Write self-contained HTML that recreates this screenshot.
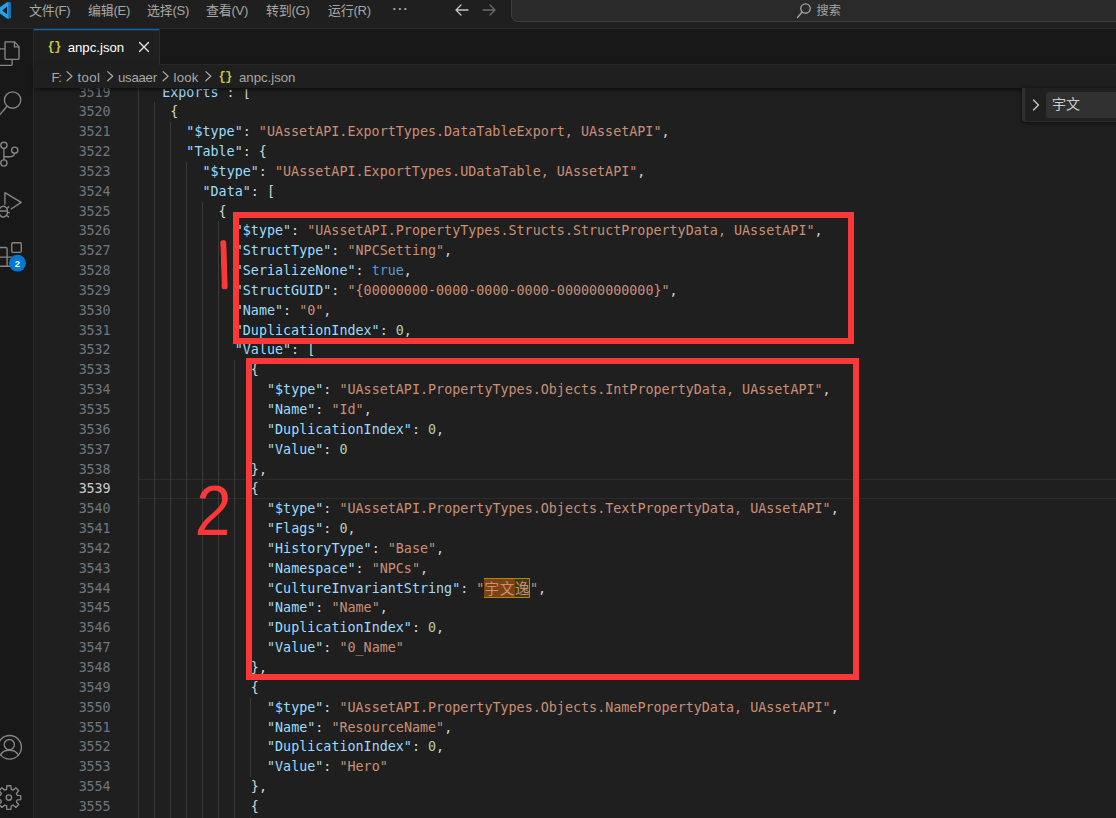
<!DOCTYPE html>
<html lang="zh-CN">
<head>
<meta charset="utf-8">
<title>anpc.json</title>
<style>
html,body{margin:0;padding:0;}
body{width:1116px;height:818px;overflow:hidden;background:#1f1f1f;position:relative;
  font-family:"Liberation Sans","Noto Sans CJK SC",sans-serif;color:#ccc;}
.abs{position:absolute;}
/* title bar */
#title{left:0;top:0;width:1116px;height:28px;background:#1f1f1f;border-bottom:1px solid #2b2b2b;}
#title .mi{position:absolute;top:0;height:22px;line-height:22px;font-size:13px;color:#a6a6a6;white-space:nowrap;letter-spacing:-0.25px;}
#search{left:511px;top:-8px;width:640px;height:30px;box-sizing:border-box;background:#2a2a2a;border:1px solid #404040;border-radius:7px;}
#search span{position:absolute;left:304.5px;top:7px;height:22px;line-height:22px;font-size:12.2px;color:#a6a6a6;}
/* activity bar */
#act{left:0;top:29px;width:33px;height:789px;background:#181818;border-right:1px solid #2b2b2b;}
/* tabs */
#tabs{left:34px;top:29px;width:1082px;height:35px;background:#181818;border-bottom:1px solid #2b2b2b;}
#tab{left:34px;top:29px;width:125px;height:36px;background:#1f1f1f;border-right:1px solid #2b2b2b;box-sizing:content-box;}
#tab:before{content:"";position:absolute;left:0;top:0;width:125px;height:1px;background:#0a69b7;box-shadow:0 1px 0 rgba(10,105,183,.25);}
#tab .nm{position:absolute;left:33.7px;top:9.3px;height:20px;line-height:20px;font-size:13.2px;color:#fff;}
#tab .br{position:absolute;left:13.5px;top:7.5px;height:20px;line-height:20px;font-size:12px;color:#cbcb41;font-family:"Liberation Mono",monospace;font-weight:bold;letter-spacing:-0.4px;}
/* breadcrumbs */
#bc{left:34px;top:65px;width:1082px;height:23px;background:#1f1f1f;z-index:5;box-shadow:0 2px 4px rgba(0,0,0,.55);}
#bc span{position:absolute;top:2.2px;height:22px;line-height:22px;font-size:13.2px;color:#a9a9a9;white-space:nowrap;}
/* editor */
#ed{left:34px;top:88px;width:1082px;height:730px;overflow:hidden;}
#lines{position:absolute;left:0;top:-5.5px;width:1082px;}
.row{position:relative;height:19.857px;width:1082px;}
.row .ln{position:absolute;left:0;width:76.3px;text-align:right;color:#6e7681;letter-spacing:-0.15px;}
.row .ln.cur{color:#ccc;}
.row,.code{font-family:"DejaVu Sans Mono","Liberation Mono","Noto Sans CJK SC",monospace;font-size:13.39px;line-height:19.857px;white-space:pre;}
.row .g{position:absolute;top:0;width:1px;height:19.857px;background:#3a3a3a;margin-left:104px;}
.row .code{position:absolute;top:0;margin-left:104px;}
.row.active:before{content:"";position:absolute;left:104px;right:0;top:0;height:19.857px;box-sizing:border-box;border-top:1px solid #2c2c2c;border-bottom:1px solid #2c2c2c;}
.row.first .code{clip-path:inset(6.5px 0 0 0);}
.hq{opacity:0;}
.k{color:#9cdcfe}.s{color:#ca8f76}.n{color:#b5cea8}.b{color:#569cd6}.p{color:#d4d4d4}
.cj{display:inline-block;width:45.5px;height:20.857px;margin-top:-1px;vertical-align:top;box-sizing:border-box;border:1px solid #b5850b;position:relative;}
.cj span{position:absolute;top:0;height:18.857px;line-height:17.857px;font-family:"Noto Sans CJK SC",sans-serif;font-size:14.5px;text-align:center;}
.cj .m1{left:-1px;width:30.5px;background:#7a4312;letter-spacing:0.6px;}
.cj .m2{left:29.5px;width:14px;background:#3e3a16;}
/* annotations */
.rect{position:absolute;box-sizing:border-box;border:6px solid #fa3838;z-index:4;}
#anno{left:0;top:0;z-index:4;}
/* find widget */
#find{left:1022px;top:88px;width:100px;height:33px;background:#202020;border-bottom:1px solid #2c2c2c;border-left:3px solid #2f2f2f;border-bottom-left-radius:4px;box-shadow:0 1px 5px rgba(0,0,0,.6);z-index:6;}
#find .inp{position:absolute;left:21px;top:4px;width:90px;height:26px;background:#313131;border-radius:3px;}
#find .inp span{position:absolute;left:6px;top:0;height:26px;line-height:25px;font-size:14px;color:#ccc;}
</style>
</head>
<body>
<!-- title bar -->
<div id="title" class="abs">
  <svg class="abs" style="left:0;top:0" width="20" height="28" viewBox="0 0 20 28">
    <path d="M-2 8.6 L7 2.3 L8.6 1.9 L11 3.1 L11 17.6 L8.6 18.8 L7 18.4 L-2 12.2 Z" fill="#2b9fe8"/>
    <path d="M8.3 1.9 L11 3.1 L11 17.6 L8.3 18.8 Z" fill="#1274c0"/>
    <path d="M2.3 10.4 L7.1 6.6 L7.1 14.2 Z" fill="#1f1f1f"/>
  </svg>
  <span class="mi" style="left:29px">文件(F)</span>
  <span class="mi" style="left:88px">编辑(E)</span>
  <span class="mi" style="left:147px">选择(S)</span>
  <span class="mi" style="left:206px">查看(V)</span>
  <span class="mi" style="left:266px">转到(G)</span>
  <span class="mi" style="left:328px">运行(R)</span>
  <span class="mi" style="left:392.5px;letter-spacing:1.2px;top:-2px;font-weight:bold">···</span>
  <svg class="abs" style="left:452px;top:1.3px" width="48" height="18" viewBox="0 0 48 18" fill="none" stroke-width="1.3" stroke-linecap="round" stroke-linejoin="round">
    <path d="M16 9 H4 M9 4 L4 9 L9 14" stroke="#c5c5c5"/>
    <path d="M31 9 H43 M38 4 L43 9 L38 14" stroke="#6a6a6a"/>
  </svg>
  <div id="search" class="abs">
    <svg class="abs" style="left:284px;top:9px" width="16" height="18" viewBox="0 0 16 18" fill="none" stroke="#a6a6a6" stroke-width="1.3" stroke-linecap="round">
      <circle cx="9.5" cy="6.5" r="4.7"/><path d="M6.2 10 L1.5 15.5"/>
    </svg>
    <span>搜索</span>
  </div>
</div>

<!-- activity bar -->
<div id="act" class="abs">
<svg class="abs" style="left:0;top:0" width="33" height="789" viewBox="0 29 33 789" fill="none" stroke="#878787" stroke-width="1.35" stroke-linejoin="round" stroke-linecap="butt">
  <!-- explorer -->
  <path d="M5 42.6 Q5 41.9 5.7 41.9 H14.6 L19 46.6 V58.6 Q19 59.3 18.3 59.3 H5.7 Q5 59.3 5 58.6 Z"/>
  <path d="M14.4 42 V46.9 H19"/>
  <path d="M5 48.9 H-2 V65.3 H11.4 Q12.1 65.3 12.1 64.6 V59.6"/>
  <!-- search -->
  <circle cx="12.6" cy="100" r="8.2"/>
  <path d="M7 106.2 L-1 115.6"/>
  <!-- source control -->
  <circle cx="3.9" cy="145.3" r="3.1"/>
  <circle cx="14.7" cy="150.2" r="3.1"/>
  <circle cx="3.9" cy="163" r="3.1"/>
  <path d="M3.9 148.4 V159.9"/>
  <path d="M3.9 156.7 H10.4 Q14.2 156.7 14.5 153.3"/>
  <!-- run and debug -->
  <path d="M4.9 204.8 V192.7 L21.2 202.4 L10.7 209.3"/>
  <ellipse cx="3.3" cy="211.6" rx="4.3" ry="5.4"/>
  <path d="M-1 211 H7.6 M7.2 208.3 L9.2 206.6 M7.6 212.6 H9.8 M7 215.6 L9 217.2"/>
  <!-- extensions -->
  <rect x="11.7" y="242.7" width="9.6" height="9.6" rx="1.3"/>
  <path d="M-2 247.5 H5.9 Q7.1 247.5 7.1 248.7 V266.2 M-2 257.1 H12 M-2 266.2 H12"/>
  <circle cx="17.5" cy="263.2" r="8.4" fill="#0078d4" stroke="none"/>
  <text x="17.5" y="266.7" text-anchor="middle" font-family="Liberation Sans, sans-serif" font-weight="bold" font-size="9.5" fill="#fff" stroke="none">2</text>
  <!-- account -->
  <circle cx="9.6" cy="747.3" r="11.8"/>
  <circle cx="9.3" cy="744.6" r="5.1"/>
  <path d="M0.6 755 Q2.6 750.2 9.3 750.2 Q16 750.2 18.3 755"/>
  <!-- settings gear -->
  <g transform="translate(8.9 797.6)">
    <circle cx="0" cy="0" r="2.7"/>
    <path d="M-2.29 -8.29 L-2.03 -11.83 L2.03 -11.83 L2.29 -8.29 L4.24 -7.48 L6.93 -9.80 L9.80 -6.93 L7.48 -4.24 L8.29 -2.29 L11.83 -2.03 L11.83 2.03 L8.29 2.29 L7.48 4.24 L9.80 6.93 L6.93 9.80 L4.24 7.48 L2.29 8.29 L2.03 11.83 L-2.03 11.83 L-2.29 8.29 L-4.24 7.48 L-6.93 9.80 L-9.80 6.93 L-7.48 4.24 L-8.29 2.29 L-11.83 2.03 L-11.83 -2.03 L-8.29 -2.29 L-7.48 -4.24 L-9.80 -6.93 L-6.93 -9.80 L-4.24 -7.48 Z"/>
  </g>
</svg>

</div>

<!-- tabs -->
<div id="tabs" class="abs"></div>
<div id="tab" class="abs">
  <span class="br">{}</span>
  <span class="nm">anpc.json</span>
  <svg class="abs" style="left:104.3px;top:12.2px" width="12" height="12" viewBox="0 0 12 12" fill="none" stroke="#e6e6e6" stroke-width="1.4" stroke-linecap="round"><path d="M1.5 1.5 L10.5 10.5 M10.5 1.5 L1.5 10.5"/></svg>
</div>

<!-- breadcrumbs -->
<div id="bc" class="abs">
  <span style="left:17.5px;letter-spacing:-1.3px">F:</span>
  <span style="left:43.5px;letter-spacing:0.35px">tool</span>
  <span style="left:84px;letter-spacing:-0.25px">usaaer</span>
  <span style="left:139.5px;letter-spacing:0.2px">look</span>
  <span style="left:205px">anpc.json</span>
  <span style="left:184.5px;top:0.5px;font-size:12px;color:#cbcb41;font-family:'Liberation Mono',monospace;font-weight:bold;letter-spacing:-0.4px;">{}</span>
  <svg class="abs" style="left:0;top:0" width="200" height="23" viewBox="0 0 200 23" fill="none" stroke="#a9a9a9" stroke-width="1.2" stroke-linecap="round" stroke-linejoin="round">
    <path d="M33 6.6 L38 11.2 L33 15.8"/><path d="M73.7 6.6 L78.7 11.2 L73.7 15.8"/><path d="M129.1 6.6 L134.1 11.2 L129.1 15.8"/><path d="M171.8 6.6 L176.8 11.2 L171.8 15.8"/>
  </svg>
</div>

<!-- editor -->
<div id="ed" class="abs">
<div id="lines">
<div class="row first"><span class="ln">3519</span><i class="g" style="left:0.0px"></i><span class="code" style="left:16.12px"><span class="k"><span class="hq">"</span>Exports<span class="hq">"</span></span><span class="p">: </span><span class="p">[</span></span></div>
<div class="row"><span class="ln">3520</span><i class="g" style="left:0.0px"></i><i class="g" style="left:16.1px"></i><span class="code" style="left:32.24px"><span class="p">{</span></span></div>
<div class="row"><span class="ln">3521</span><i class="g" style="left:0.0px"></i><i class="g" style="left:16.1px"></i><i class="g" style="left:32.1px"></i><span class="code" style="left:48.37px"><span class="k">"$type"</span><span class="p">: </span><span class="s">"UAssetAPI.ExportTypes.DataTableExport, UAssetAPI"</span><span class="p">,</span></span></div>
<div class="row"><span class="ln">3522</span><i class="g" style="left:0.0px"></i><i class="g" style="left:16.1px"></i><i class="g" style="left:32.1px"></i><span class="code" style="left:48.37px"><span class="k">"Table"</span><span class="p">: </span><span class="p">{</span></span></div>
<div class="row"><span class="ln">3523</span><i class="g" style="left:0.0px"></i><i class="g" style="left:16.1px"></i><i class="g" style="left:32.1px"></i><i class="g" style="left:48.2px"></i><span class="code" style="left:64.49px"><span class="k">"$type"</span><span class="p">: </span><span class="s">"UAssetAPI.ExportTypes.UDataTable, UAssetAPI"</span><span class="p">,</span></span></div>
<div class="row"><span class="ln">3524</span><i class="g" style="left:0.0px"></i><i class="g" style="left:16.1px"></i><i class="g" style="left:32.1px"></i><i class="g" style="left:48.2px"></i><span class="code" style="left:64.49px"><span class="k">"Data"</span><span class="p">: </span><span class="p">[</span></span></div>
<div class="row"><span class="ln">3525</span><i class="g" style="left:0.0px"></i><i class="g" style="left:16.1px"></i><i class="g" style="left:32.1px"></i><i class="g" style="left:48.2px"></i><i class="g" style="left:64.2px"></i><span class="code" style="left:80.61px"><span class="p">{</span></span></div>
<div class="row"><span class="ln">3526</span><i class="g" style="left:0.0px"></i><i class="g" style="left:16.1px"></i><i class="g" style="left:32.1px"></i><i class="g" style="left:48.2px"></i><i class="g" style="left:64.2px"></i><i class="g" style="left:80.3px"></i><span class="code" style="left:96.73px"><span class="k">"$type"</span><span class="p">: </span><span class="s">"UAssetAPI.PropertyTypes.Structs.StructPropertyData, UAssetAPI"</span><span class="p">,</span></span></div>
<div class="row"><span class="ln">3527</span><i class="g" style="left:0.0px"></i><i class="g" style="left:16.1px"></i><i class="g" style="left:32.1px"></i><i class="g" style="left:48.2px"></i><i class="g" style="left:64.2px"></i><i class="g" style="left:80.3px"></i><span class="code" style="left:96.73px"><span class="k">"StructType"</span><span class="p">: </span><span class="s">"NPCSetting"</span><span class="p">,</span></span></div>
<div class="row"><span class="ln">3528</span><i class="g" style="left:0.0px"></i><i class="g" style="left:16.1px"></i><i class="g" style="left:32.1px"></i><i class="g" style="left:48.2px"></i><i class="g" style="left:64.2px"></i><i class="g" style="left:80.3px"></i><span class="code" style="left:96.73px"><span class="k">"SerializeNone"</span><span class="p">: </span><span class="b">true</span><span class="p">,</span></span></div>
<div class="row"><span class="ln">3529</span><i class="g" style="left:0.0px"></i><i class="g" style="left:16.1px"></i><i class="g" style="left:32.1px"></i><i class="g" style="left:48.2px"></i><i class="g" style="left:64.2px"></i><i class="g" style="left:80.3px"></i><span class="code" style="left:96.73px"><span class="k">"StructGUID"</span><span class="p">: </span><span class="s">"{00000000-0000-0000-0000-000000000000}"</span><span class="p">,</span></span></div>
<div class="row"><span class="ln">3530</span><i class="g" style="left:0.0px"></i><i class="g" style="left:16.1px"></i><i class="g" style="left:32.1px"></i><i class="g" style="left:48.2px"></i><i class="g" style="left:64.2px"></i><i class="g" style="left:80.3px"></i><span class="code" style="left:96.73px"><span class="k">"Name"</span><span class="p">: </span><span class="s">"0"</span><span class="p">,</span></span></div>
<div class="row"><span class="ln">3531</span><i class="g" style="left:0.0px"></i><i class="g" style="left:16.1px"></i><i class="g" style="left:32.1px"></i><i class="g" style="left:48.2px"></i><i class="g" style="left:64.2px"></i><i class="g" style="left:80.3px"></i><span class="code" style="left:96.73px"><span class="k">"DuplicationIndex"</span><span class="p">: </span><span class="n">0</span><span class="p">,</span></span></div>
<div class="row"><span class="ln">3532</span><i class="g" style="left:0.0px"></i><i class="g" style="left:16.1px"></i><i class="g" style="left:32.1px"></i><i class="g" style="left:48.2px"></i><i class="g" style="left:64.2px"></i><i class="g" style="left:80.3px"></i><span class="code" style="left:96.73px"><span class="k">"Value"</span><span class="p">: </span><span class="p">[</span></span></div>
<div class="row"><span class="ln">3533</span><i class="g" style="left:0.0px"></i><i class="g" style="left:16.1px"></i><i class="g" style="left:32.1px"></i><i class="g" style="left:48.2px"></i><i class="g" style="left:64.2px"></i><i class="g" style="left:80.3px"></i><i class="g" style="left:96.4px"></i><span class="code" style="left:112.85px"><span class="p">{</span></span></div>
<div class="row"><span class="ln">3534</span><i class="g" style="left:0.0px"></i><i class="g" style="left:16.1px"></i><i class="g" style="left:32.1px"></i><i class="g" style="left:48.2px"></i><i class="g" style="left:64.2px"></i><i class="g" style="left:80.3px"></i><i class="g" style="left:96.4px"></i><i class="g" style="left:112.4px"></i><span class="code" style="left:128.98px"><span class="k">"$type"</span><span class="p">: </span><span class="s">"UAssetAPI.PropertyTypes.Objects.IntPropertyData, UAssetAPI"</span><span class="p">,</span></span></div>
<div class="row"><span class="ln">3535</span><i class="g" style="left:0.0px"></i><i class="g" style="left:16.1px"></i><i class="g" style="left:32.1px"></i><i class="g" style="left:48.2px"></i><i class="g" style="left:64.2px"></i><i class="g" style="left:80.3px"></i><i class="g" style="left:96.4px"></i><i class="g" style="left:112.4px"></i><span class="code" style="left:128.98px"><span class="k">"Name"</span><span class="p">: </span><span class="s">"Id"</span><span class="p">,</span></span></div>
<div class="row"><span class="ln">3536</span><i class="g" style="left:0.0px"></i><i class="g" style="left:16.1px"></i><i class="g" style="left:32.1px"></i><i class="g" style="left:48.2px"></i><i class="g" style="left:64.2px"></i><i class="g" style="left:80.3px"></i><i class="g" style="left:96.4px"></i><i class="g" style="left:112.4px"></i><span class="code" style="left:128.98px"><span class="k">"DuplicationIndex"</span><span class="p">: </span><span class="n">0</span><span class="p">,</span></span></div>
<div class="row"><span class="ln">3537</span><i class="g" style="left:0.0px"></i><i class="g" style="left:16.1px"></i><i class="g" style="left:32.1px"></i><i class="g" style="left:48.2px"></i><i class="g" style="left:64.2px"></i><i class="g" style="left:80.3px"></i><i class="g" style="left:96.4px"></i><i class="g" style="left:112.4px"></i><span class="code" style="left:128.98px"><span class="k">"Value"</span><span class="p">: </span><span class="n">0</span></span></div>
<div class="row"><span class="ln">3538</span><i class="g" style="left:0.0px"></i><i class="g" style="left:16.1px"></i><i class="g" style="left:32.1px"></i><i class="g" style="left:48.2px"></i><i class="g" style="left:64.2px"></i><i class="g" style="left:80.3px"></i><i class="g" style="left:96.4px"></i><span class="code" style="left:112.85px"><span class="p">},</span></span></div>
<div class="row active"><span class="ln cur">3539</span><i class="g" style="left:0.0px"></i><i class="g" style="left:16.1px"></i><i class="g" style="left:32.1px"></i><i class="g" style="left:48.2px"></i><i class="g" style="left:64.2px"></i><i class="g" style="left:80.3px"></i><i class="g" style="left:96.4px"></i><span class="code" style="left:112.85px"><span class="p">{</span></span></div>
<div class="row"><span class="ln">3540</span><i class="g" style="left:0.0px"></i><i class="g" style="left:16.1px"></i><i class="g" style="left:32.1px"></i><i class="g" style="left:48.2px"></i><i class="g" style="left:64.2px"></i><i class="g" style="left:80.3px"></i><i class="g" style="left:96.4px"></i><i class="g" style="left:112.4px"></i><span class="code" style="left:128.98px"><span class="k">"$type"</span><span class="p">: </span><span class="s">"UAssetAPI.PropertyTypes.Objects.TextPropertyData, UAssetAPI"</span><span class="p">,</span></span></div>
<div class="row"><span class="ln">3541</span><i class="g" style="left:0.0px"></i><i class="g" style="left:16.1px"></i><i class="g" style="left:32.1px"></i><i class="g" style="left:48.2px"></i><i class="g" style="left:64.2px"></i><i class="g" style="left:80.3px"></i><i class="g" style="left:96.4px"></i><i class="g" style="left:112.4px"></i><span class="code" style="left:128.98px"><span class="k">"Flags"</span><span class="p">: </span><span class="n">0</span><span class="p">,</span></span></div>
<div class="row"><span class="ln">3542</span><i class="g" style="left:0.0px"></i><i class="g" style="left:16.1px"></i><i class="g" style="left:32.1px"></i><i class="g" style="left:48.2px"></i><i class="g" style="left:64.2px"></i><i class="g" style="left:80.3px"></i><i class="g" style="left:96.4px"></i><i class="g" style="left:112.4px"></i><span class="code" style="left:128.98px"><span class="k">"HistoryType"</span><span class="p">: </span><span class="s">"Base"</span><span class="p">,</span></span></div>
<div class="row"><span class="ln">3543</span><i class="g" style="left:0.0px"></i><i class="g" style="left:16.1px"></i><i class="g" style="left:32.1px"></i><i class="g" style="left:48.2px"></i><i class="g" style="left:64.2px"></i><i class="g" style="left:80.3px"></i><i class="g" style="left:96.4px"></i><i class="g" style="left:112.4px"></i><span class="code" style="left:128.98px"><span class="k">"Namespace"</span><span class="p">: </span><span class="s">"NPCs"</span><span class="p">,</span></span></div>
<div class="row"><span class="ln">3544</span><i class="g" style="left:0.0px"></i><i class="g" style="left:16.1px"></i><i class="g" style="left:32.1px"></i><i class="g" style="left:48.2px"></i><i class="g" style="left:64.2px"></i><i class="g" style="left:80.3px"></i><i class="g" style="left:96.4px"></i><i class="g" style="left:112.4px"></i><span class="code" style="left:128.98px"><span class="k">"CultureInvariantString"</span><span class="p">: </span><span class="s">"<span class="cj"><span class="m1">宇文</span><span class="m2">逸</span></span>"</span><span class="p">,</span></span></div>
<div class="row"><span class="ln">3545</span><i class="g" style="left:0.0px"></i><i class="g" style="left:16.1px"></i><i class="g" style="left:32.1px"></i><i class="g" style="left:48.2px"></i><i class="g" style="left:64.2px"></i><i class="g" style="left:80.3px"></i><i class="g" style="left:96.4px"></i><i class="g" style="left:112.4px"></i><span class="code" style="left:128.98px"><span class="k">"Name"</span><span class="p">: </span><span class="s">"Name"</span><span class="p">,</span></span></div>
<div class="row"><span class="ln">3546</span><i class="g" style="left:0.0px"></i><i class="g" style="left:16.1px"></i><i class="g" style="left:32.1px"></i><i class="g" style="left:48.2px"></i><i class="g" style="left:64.2px"></i><i class="g" style="left:80.3px"></i><i class="g" style="left:96.4px"></i><i class="g" style="left:112.4px"></i><span class="code" style="left:128.98px"><span class="k">"DuplicationIndex"</span><span class="p">: </span><span class="n">0</span><span class="p">,</span></span></div>
<div class="row"><span class="ln">3547</span><i class="g" style="left:0.0px"></i><i class="g" style="left:16.1px"></i><i class="g" style="left:32.1px"></i><i class="g" style="left:48.2px"></i><i class="g" style="left:64.2px"></i><i class="g" style="left:80.3px"></i><i class="g" style="left:96.4px"></i><i class="g" style="left:112.4px"></i><span class="code" style="left:128.98px"><span class="k">"Value"</span><span class="p">: </span><span class="s">"0_Name"</span></span></div>
<div class="row"><span class="ln">3548</span><i class="g" style="left:0.0px"></i><i class="g" style="left:16.1px"></i><i class="g" style="left:32.1px"></i><i class="g" style="left:48.2px"></i><i class="g" style="left:64.2px"></i><i class="g" style="left:80.3px"></i><i class="g" style="left:96.4px"></i><span class="code" style="left:112.85px"><span class="p">},</span></span></div>
<div class="row"><span class="ln">3549</span><i class="g" style="left:0.0px"></i><i class="g" style="left:16.1px"></i><i class="g" style="left:32.1px"></i><i class="g" style="left:48.2px"></i><i class="g" style="left:64.2px"></i><i class="g" style="left:80.3px"></i><i class="g" style="left:96.4px"></i><span class="code" style="left:112.85px"><span class="p">{</span></span></div>
<div class="row"><span class="ln">3550</span><i class="g" style="left:0.0px"></i><i class="g" style="left:16.1px"></i><i class="g" style="left:32.1px"></i><i class="g" style="left:48.2px"></i><i class="g" style="left:64.2px"></i><i class="g" style="left:80.3px"></i><i class="g" style="left:96.4px"></i><i class="g" style="left:112.4px"></i><span class="code" style="left:128.98px"><span class="k">"$type"</span><span class="p">: </span><span class="s">"UAssetAPI.PropertyTypes.Objects.NamePropertyData, UAssetAPI"</span><span class="p">,</span></span></div>
<div class="row"><span class="ln">3551</span><i class="g" style="left:0.0px"></i><i class="g" style="left:16.1px"></i><i class="g" style="left:32.1px"></i><i class="g" style="left:48.2px"></i><i class="g" style="left:64.2px"></i><i class="g" style="left:80.3px"></i><i class="g" style="left:96.4px"></i><i class="g" style="left:112.4px"></i><span class="code" style="left:128.98px"><span class="k">"Name"</span><span class="p">: </span><span class="s">"ResourceName"</span><span class="p">,</span></span></div>
<div class="row"><span class="ln">3552</span><i class="g" style="left:0.0px"></i><i class="g" style="left:16.1px"></i><i class="g" style="left:32.1px"></i><i class="g" style="left:48.2px"></i><i class="g" style="left:64.2px"></i><i class="g" style="left:80.3px"></i><i class="g" style="left:96.4px"></i><i class="g" style="left:112.4px"></i><span class="code" style="left:128.98px"><span class="k">"DuplicationIndex"</span><span class="p">: </span><span class="n">0</span><span class="p">,</span></span></div>
<div class="row"><span class="ln">3553</span><i class="g" style="left:0.0px"></i><i class="g" style="left:16.1px"></i><i class="g" style="left:32.1px"></i><i class="g" style="left:48.2px"></i><i class="g" style="left:64.2px"></i><i class="g" style="left:80.3px"></i><i class="g" style="left:96.4px"></i><i class="g" style="left:112.4px"></i><span class="code" style="left:128.98px"><span class="k">"Value"</span><span class="p">: </span><span class="s">"Hero"</span></span></div>
<div class="row"><span class="ln">3554</span><i class="g" style="left:0.0px"></i><i class="g" style="left:16.1px"></i><i class="g" style="left:32.1px"></i><i class="g" style="left:48.2px"></i><i class="g" style="left:64.2px"></i><i class="g" style="left:80.3px"></i><i class="g" style="left:96.4px"></i><span class="code" style="left:112.85px"><span class="p">},</span></span></div>
<div class="row"><span class="ln">3555</span><i class="g" style="left:0.0px"></i><i class="g" style="left:16.1px"></i><i class="g" style="left:32.1px"></i><i class="g" style="left:48.2px"></i><i class="g" style="left:64.2px"></i><i class="g" style="left:80.3px"></i><i class="g" style="left:96.4px"></i><span class="code" style="left:112.85px"><span class="p">{</span></span></div>
<div class="row"><span class="ln">3556</span><i class="g" style="left:0.0px"></i><i class="g" style="left:16.1px"></i><i class="g" style="left:32.1px"></i><i class="g" style="left:48.2px"></i><i class="g" style="left:64.2px"></i><i class="g" style="left:80.3px"></i><i class="g" style="left:96.4px"></i><i class="g" style="left:112.4px"></i><span class="code" style="left:128.98px"><span class="k">"$type"</span><span class="p">: </span><span class="s">"UAssetAPI.PropertyTypes.Objects.ObjectPropertyData, UAssetAPI"</span><span class="p">,</span></span></div>
</div>
</div>

<!-- find widget -->
<div id="find" class="abs">
  <svg class="abs" style="left:5px;top:9px" width="12" height="16" viewBox="0 0 12 16" fill="none" stroke="#ccc" stroke-width="1.3" stroke-linecap="round" stroke-linejoin="round"><path d="M3.5 3 L8.5 8 L3.5 13"/></svg>
  <div class="inp"><span>宇文</span></div>
</div>

<!-- red annotations -->
<div class="rect" style="left:233px;top:212px;width:621px;height:132px"></div>
<div class="rect" style="left:246px;top:358px;width:613px;height:322px"></div>
<svg id="anno" class="abs" width="1116" height="818" viewBox="0 0 1116 818">
  <defs><clipPath id="c1"><rect x="221" y="240" width="6" height="49.5" rx="3"/></clipPath></defs>
  <g transform="rotate(-1.8 224 264.75)"><g clip-path="url(#c1)"><text x="203" y="289.7" font-family="Liberation Sans, sans-serif" font-size="72" fill="#fa3838">1</text></g></g>
  <text x="0" y="0" font-family="Liberation Sans, sans-serif" font-size="71" fill="#fa3838" transform="translate(194.5 535) scale(0.9 1) skewX(-3)">2</text>
</svg>
</body>
</html>
